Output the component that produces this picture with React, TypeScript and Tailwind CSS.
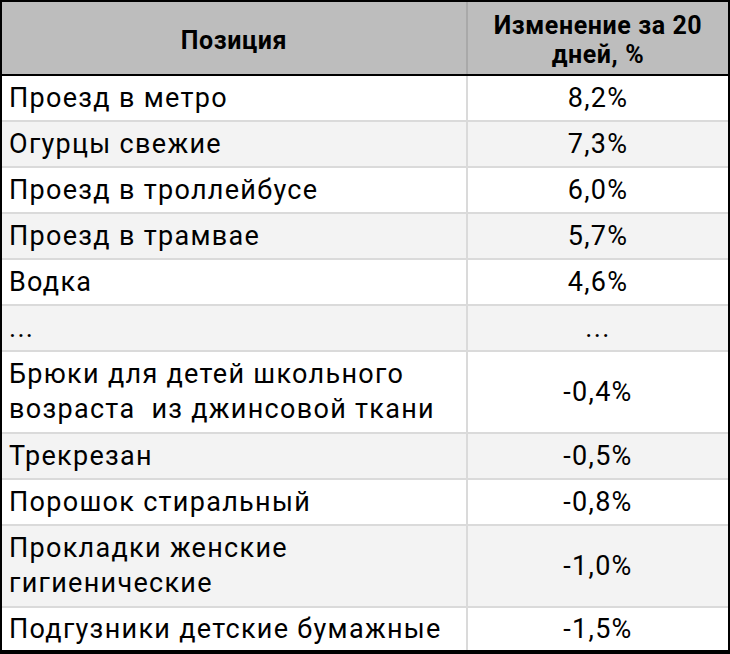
import React from 'react';

type Row = {
  name: React.ReactNode;
  value: string;
  tall?: boolean;
};

const rows: Row[] = [
  { name: 'Проезд в метро', value: '8,2%' },
  { name: 'Огурцы свежие', value: '7,3%' },
  { name: 'Проезд в троллейбусе', value: '6,0%' },
  { name: 'Проезд в трамвае', value: '5,7%' },
  { name: 'Водка', value: '4,6%' },
  { name: '...', value: '...' },
  {
    name: (
      <>
        Брюки для детей школьного
        <br />
        возраста{'\u00a0'} из джинсовой ткани
      </>
    ),
    value: '-0,4%',
    tall: true,
  },
  { name: 'Трекрезан', value: '-0,5%' },
  { name: 'Порошок стиральный', value: '-0,8%' },
  {
    name: (
      <>
        Прокладки женские
        <br />
        гигиенические
      </>
    ),
    value: '-1,0%',
    tall: true,
  },
  { name: 'Подгузники детские бумажные', value: '-1,5%' },
];

export default function App() {
  return (
    <div className="w-[730px] h-[654px] bg-white overflow-hidden">
      <div
        className="w-[730px] border-t-2 border-x-2 border-b-4 border-black text-black"
        style={{ fontFamily: 'Roboto, "Liberation Sans", sans-serif' }}
      >
        {/* Header */}
        <div className="flex h-[74px] bg-[#bdbdbd] border-b-2 border-black">
          <div className="w-[464px] shrink-0 flex items-center justify-center pt-[4px] text-[25px] leading-[29px] tracking-[0.6px] font-bold">
            Позиция
          </div>
          <div className="flex-1 border-l-2 border-[#a9a9a9] flex items-center justify-center pt-[4px] text-center text-[25px] leading-[29px] tracking-[0.6px] font-bold">
            Изменение за 20
            <br />
            дней, %
          </div>
        </div>

        {/* Body */}
        {rows.map((row, i) => {
          const last = i === rows.length - 1;
          return (
            <div
              key={i}
              className={
                'flex text-[27px] leading-[35px] tracking-[1.3px] ' +
                (i % 2 === 1 ? 'bg-[#f3f3f3] ' : 'bg-white ') +
                (last ? 'h-[42px]' : 'border-b-2 border-[#dadada] ') +
                (!last && row.tall ? 'h-[82px]' : '') +
                (!last && !row.tall ? 'h-[46px]' : '')
              }
            >
              <div className="w-[464px] shrink-0 flex items-center pl-[7px] whitespace-nowrap">
                {row.name}
              </div>
              <div className="flex-1 border-l-2 border-[#dadada] flex items-center justify-center">
                {row.value}
              </div>
            </div>
          );
        })}
      </div>
    </div>
  );
}
